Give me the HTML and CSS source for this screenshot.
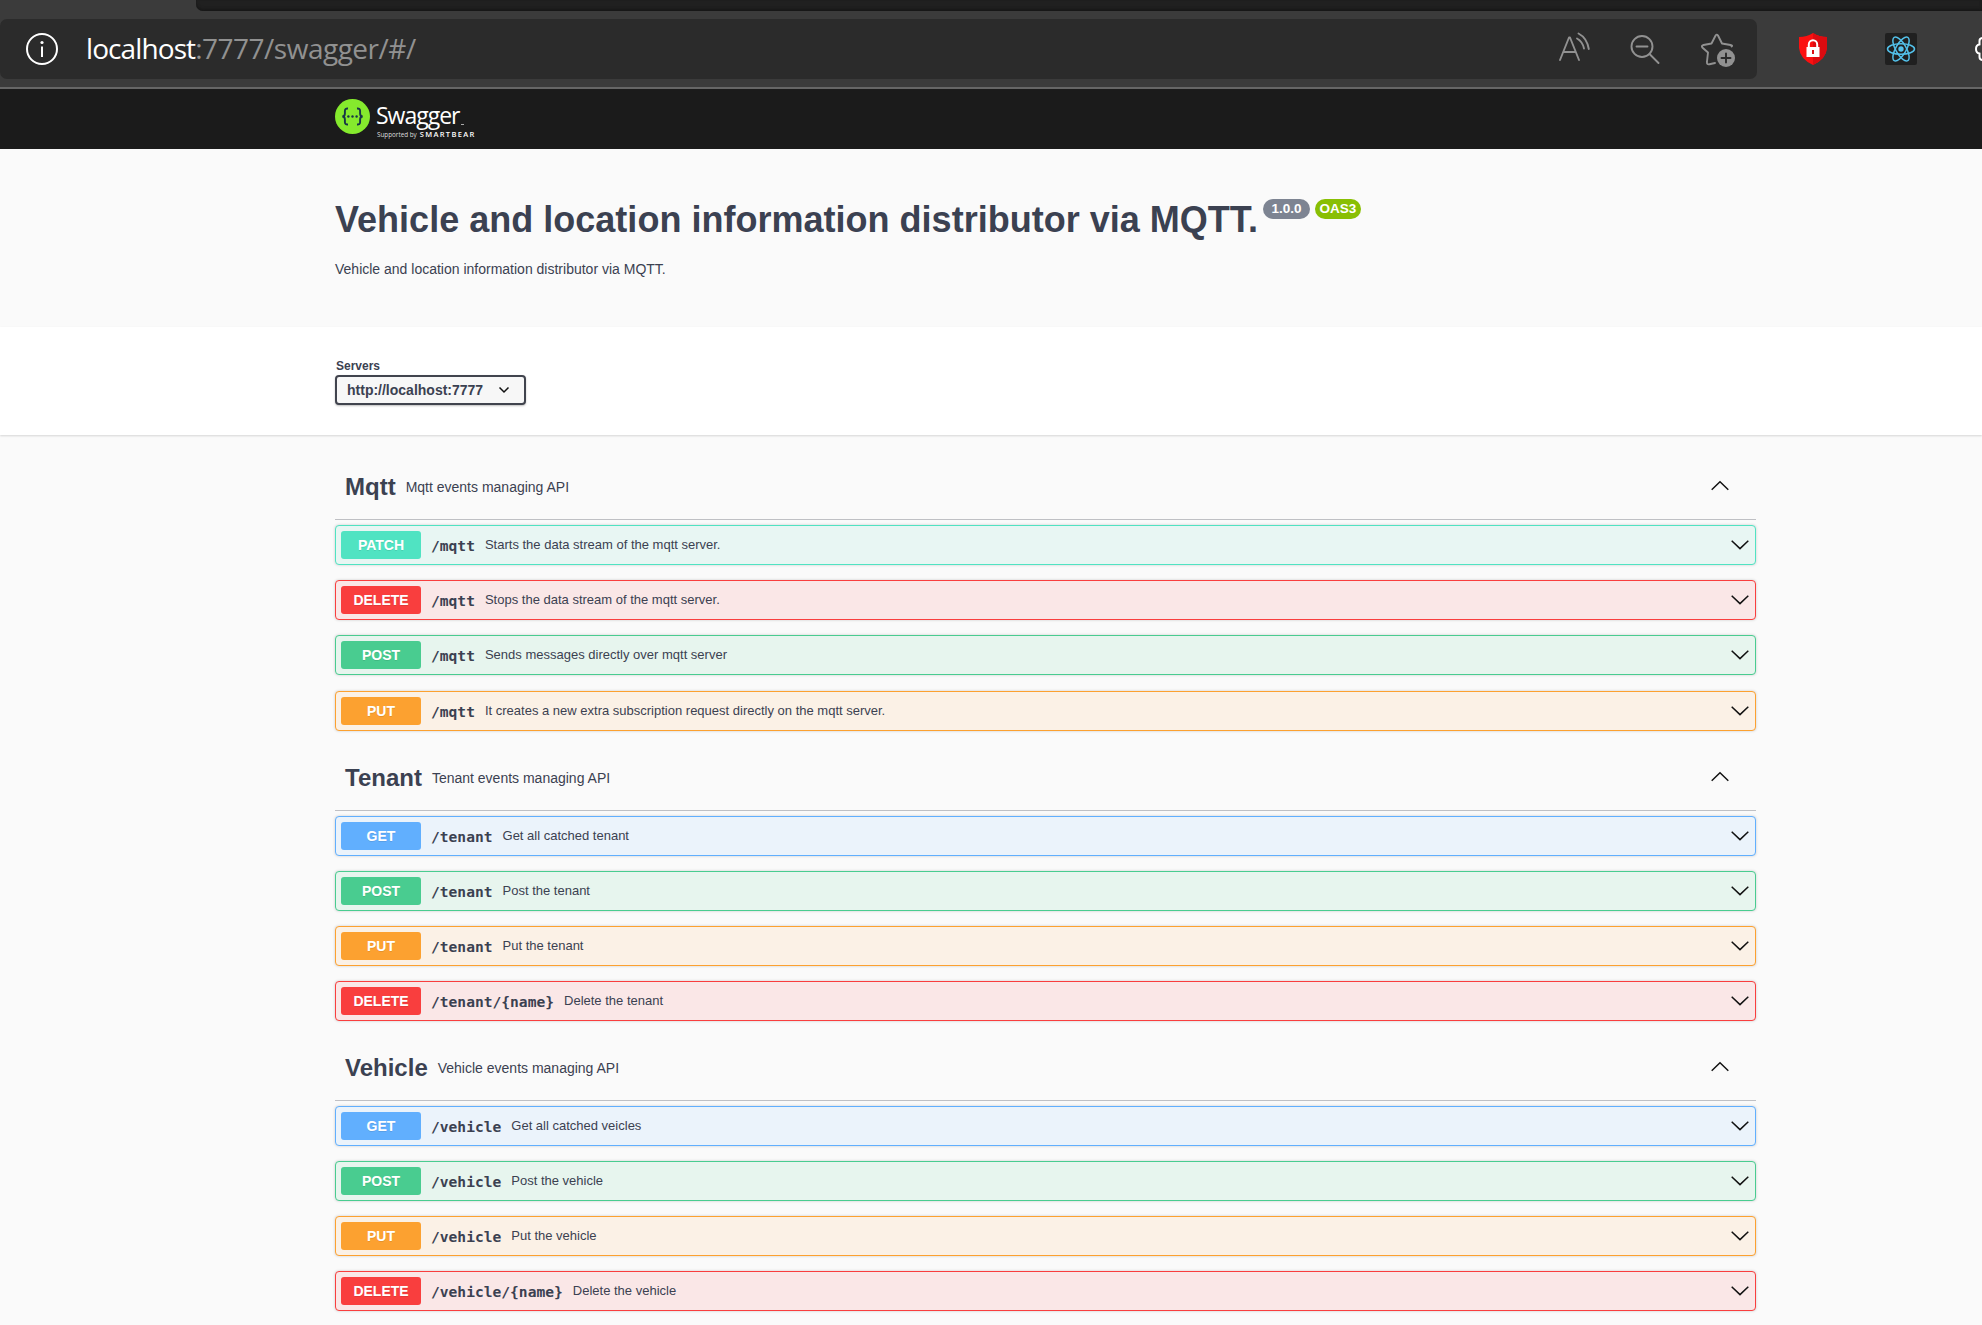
FILE: index.html
```
<!DOCTYPE html>
<html lang="en">
<head>
<meta charset="utf-8">
<title>Swagger UI</title>
<link rel="stylesheet" href="styles.css">
</head>
<body>
<svg class="defs" aria-hidden="true">
  <symbol id="down" viewBox="0 0 20 12"><path d="M1.7 1.7 L10 9.6 L18.3 1.7"/></symbol>
  <symbol id="up" viewBox="0 0 20 12"><path d="M1.7 9.7 L10 1.8 L18.3 9.7"/></symbol>
</svg>
<header class="browser">
  <div class="tabs"></div>
  <div class="toolbar">
    <div class="address">
      <svg class="info" viewBox="0 0 34 34" fill="none" stroke="#fff" stroke-width="2"><circle cx="17" cy="17" r="15"/><path d="M17 14.5V25"/><circle cx="17" cy="10.5" r="1.6" fill="#fff" stroke="none"/></svg>
      <div class="url"><span class="host">localhost</span><span class="path">:7777/swagger/#/</span></div>
      <svg class="tool read" viewBox="0 0 32 30"><path d="M1 28 L10 5.5 H11 L20 28 M4.5 20 H16.5"/><path d="M18 6.5 Q23.500 9.500 25 16.5"/><path d="M19.500 1.500 Q28 6 29.800 17"/></svg>
      <svg class="tool search" viewBox="0 0 30 30"><circle cx="12" cy="12.500" r="10.500"/><path d="M6.500 12.500H17.500M19.500 20L28.500 29"/></svg>
      <svg class="tool star" viewBox="0 0 36 36"><path d="M15 31 L9.500 32.200 Q6.500 33 7 29.500 L8 20.500 L2.300 15.500 Q1 13.800 3.500 13 L11.500 11.500 L15.600 3.500 Q16.800 1.800 18 3.500 L22 11.500 L30.500 13 Q33 13.500 31.500 14.500"/><circle cx="26" cy="26" r="9" fill="#919191" stroke="none"/><path d="M26 21.500v9M21.500 26h9" stroke="#2b2b2b"/></svg>
    </div>
    <svg class="shield" viewBox="0 0 30 34"><path d="M15 1 Q21 5 29 5 V16 Q28 27 15 33 Q2 27 1 16 V5 Q9 5 15 1Z" fill="#fb1010"/><path d="M15 1 Q21 5 29 5 V16 Q28 27 15 33Z" fill="#dc0b10"/><path d="M10.800 15V12.500a4.200 4.200 0 0 1 8.400 0V15" fill="none" stroke="#fff" stroke-width="2"/><rect x="8.500" y="15" width="13" height="10" fill="#fff"/><path d="M14 18h2v4h-2z" fill="#d91016"/></svg>
    <svg class="react" viewBox="0 0 32 32"><rect width="32" height="32" rx="2" fill="#202020"/><g fill="none" stroke="#53c1ea" stroke-width="1.500"><ellipse cx="16" cy="16" rx="13.500" ry="5.200"/><ellipse cx="16" cy="16" rx="13.500" ry="5.200" transform="rotate(60 16 16)"/><ellipse cx="16" cy="16" rx="13.500" ry="5.200" transform="rotate(120 16 16)"/></g><circle cx="16" cy="16" r="2.700" fill="#53c1ea"/></svg>
    <svg class="puzzle" viewBox="0 0 7 26" fill="none" stroke="#fff" stroke-width="2"><path d="M8 2 Q4.500 2 4.500 5 V8.500 Q1 9 1 13 Q1 17 4.500 17.500 V21 Q4.500 24 8 24"/></svg>
  </div>
</header>
<div class="topbar">
  <div class="wrap brand">
    <svg class="logo" viewBox="0 0 35 35"><circle cx="17.500" cy="17.500" r="17.500" fill="#85ea2d"/><g fill="none" stroke="#173647" stroke-width="1.900"><path d="M13 9.500 Q9.800 9.300 9.900 12 V14.500 Q9.900 17.400 7.300 17.500 Q9.900 17.600 9.900 20.500 V23 Q9.800 25.700 13 25.500M22 9.500 Q25.200 9.300 25.100 12 V14.500 Q25.100 17.400 27.700 17.500 Q25.100 17.600 25.100 20.500 V23 Q25.200 25.700 22 25.500"/></g><g fill="#173647"><circle cx="13.400" cy="17.500" r="1.200"/><circle cx="17.500" cy="17.500" r="1.200"/><circle cx="21.600" cy="17.500" r="1.200"/></g></svg>
    <div class="wordmark"><div class="name">Swagger<i></i></div><div class="support"><span>Supported by</span><b>SMARTBEAR</b></div></div>
  </div>
</div>
<section class="intro"><div class="wrap">
  <h1><span class="title">Vehicle and location information distributor via MQTT.</span><span class="badge">1.0.0</span><span class="badge oas">OAS3</span></h1>
  <p>Vehicle and location information distributor via MQTT.</p>
</div></section>
<section class="servers"><div class="wrap">
  <div class="label">Servers</div>
  <div class="select"><span>http://localhost:7777</span><svg viewBox="0 0 12 8"><path d="M1.500 1.500L6 6L10.500 1.500"/></svg></div>
</div></section>
<main class="wrap">
  <section class="group mqtt">
    <div class="head"><h2>Mqtt</h2><span>Mqtt events managing API</span><svg class="chev"><use href="#up"/></svg></div>
    <div class="op patch"><b>PATCH</b><code>/mqtt</code><span>Starts the data stream of the mqtt server.</span><svg class="chev"><use href="#down"/></svg></div>
    <div class="op delete"><b>DELETE</b><code>/mqtt</code><span>Stops the data stream of the mqtt server.</span><svg class="chev"><use href="#down"/></svg></div>
    <div class="op post"><b>POST</b><code>/mqtt</code><span>Sends messages directly over mqtt server</span><svg class="chev"><use href="#down"/></svg></div>
    <div class="op put"><b>PUT</b><code>/mqtt</code><span>It creates a new extra subscription request directly on the mqtt server.</span><svg class="chev"><use href="#down"/></svg></div>
  </section>
  <section class="group">
    <div class="head"><h2>Tenant</h2><span>Tenant events managing API</span><svg class="chev"><use href="#up"/></svg></div>
    <div class="op get"><b>GET</b><code>/tenant</code><span>Get all catched tenant</span><svg class="chev"><use href="#down"/></svg></div>
    <div class="op post"><b>POST</b><code>/tenant</code><span>Post the tenant</span><svg class="chev"><use href="#down"/></svg></div>
    <div class="op put"><b>PUT</b><code>/tenant</code><span>Put the tenant</span><svg class="chev"><use href="#down"/></svg></div>
    <div class="op delete"><b>DELETE</b><code>/tenant/{name}</code><span>Delete the tenant</span><svg class="chev"><use href="#down"/></svg></div>
  </section>
  <section class="group">
    <div class="head"><h2>Vehicle</h2><span>Vehicle events managing API</span><svg class="chev"><use href="#up"/></svg></div>
    <div class="op get"><b>GET</b><code>/vehicle</code><span>Get all catched veicles</span><svg class="chev"><use href="#down"/></svg></div>
    <div class="op post"><b>POST</b><code>/vehicle</code><span>Post the vehicle</span><svg class="chev"><use href="#down"/></svg></div>
    <div class="op put"><b>PUT</b><code>/vehicle</code><span>Put the vehicle</span><svg class="chev"><use href="#down"/></svg></div>
    <div class="op delete"><b>DELETE</b><code>/vehicle/{name}</code><span>Delete the vehicle</span><svg class="chev"><use href="#down"/></svg></div>
  </section>
</main>
</body>
</html>
```
FILE: styles.css
```
* { box-sizing: border-box; }
html, body { height: 1325px; overflow: hidden; }
body { margin: 0; background: #fafafa; color: #3b4151; font-family: "Liberation Sans", Arial, sans-serif; }
svg { display: block; flex: none; }
.defs { width: 0; height: 0; position: absolute; }
.wrap { width: 1421px; margin-left: 335px; }

.browser { height: 89px; background: #3b3b3b; border-bottom: 2px solid #666; overflow: hidden; }
.tabs { height: 11px; margin-left: 196px; background: #202020; border-bottom-left-radius: 7px; box-shadow: inset 0 -2px 3px #171717; }
.toolbar { display: flex; align-items: center; height: 60px; margin-top: 8px; }
.address { display: flex; align-items: center; width: 1757px; height: 60px; padding-left: 25px; background: #2b2b2b; border-radius: 7px; flex: none; }
.info { width: 34px; height: 34px; }
.url { display: flex; margin: -2px 0 0 27px; width: 1473px; font: 28px/40px "Open Sans", "Noto Sans", sans-serif; white-space: pre; }
.host { color: #fff; letter-spacing: -0.9px; }
.path { color: #919191; letter-spacing: -0.5px; }
.tool { fill: none; stroke: #919191; stroke-width: 1.9; stroke-linecap: round; stroke-linejoin: round; }
.read { width: 32px; height: 30px; margin-top: -4px; }
.search { width: 30px; height: 30px; margin-left: 39px; }
.star { width: 36px; height: 36px; margin: 2px 0 0 40px; }
.shield { width: 30px; height: 34px; margin-left: 41px; }
.react { width: 32px; height: 32px; margin-left: 57px; }
.puzzle { width: 7px; height: 26px; margin-left: 58px; }

.topbar { height: 60px; background: #1b1b1b; }
.brand { display: flex; padding-top: 10px; }
.logo { width: 35px; height: 35px; }
.wordmark { margin-left: 6px; color: #fff; font-family: "Open Sans", sans-serif; }
.name { display: flex; align-items: flex-end; height: 29px; margin-top: 2px; font-size: 23px; line-height: 29px; letter-spacing: -1px; }
.name i { width: 3px; height: 1px; margin: 0 0 5px 1px; background: #aaa; }
.support { display: flex; gap: 3px; padding-left: 1px; font-size: 6.3px; line-height: 9px; }
.support span { color: #ddd; }
.support b { font-size: 7.5px; font-weight: 600; letter-spacing: 1.35px; }

.intro { height: 178px; padding-top: 50px; }
h1 { display: flex; margin: 0; font-size: 36px; line-height: 41px; }
.title { white-space: nowrap; letter-spacing: 0.015px; }
.badge { height: 20px; width: 47px; margin: 0 0 0 5px; border-radius: 10px; background: #7d8492; color: #fff; font-size: 13.5px; line-height: 20px; text-align: center; flex: none; }
.oas { width: 46px; background: #89bf04; }
.intro p { margin: 20px 0 0; font-size: 14px; line-height: 18px; }

.servers { height: 108px; padding-top: 32px; background: #fff; box-shadow: 0 1px 2px rgba(0,0,0,.15); }
.label { height: 16px; padding-left: 1px; font-size: 12px; font-weight: bold; line-height: 15px; }
.select { display: flex; align-items: center; width: 191px; height: 30px; padding-left: 10px; border: 2px solid #41444e; border-radius: 4px; background: #f7f7f7; box-shadow: 0 1px 2px rgba(0,0,0,.25); font-size: 14px; font-weight: bold; }
.select svg { width: 12px; height: 8px; margin-left: 15px; fill: none; stroke: #111; stroke-width: 1.5; }

main .group:first-child { padding-top: 20px; }
.head { display: flex; align-items: center; height: 65px; margin-bottom: 5px; padding: 0 26px 0 10px; border-bottom: 1px solid #bfc0c4; }
h2 { margin: 0; font-size: 24px; line-height: 30px; }
.head span { margin-left: 10px; font-size: 14px; line-height: 20px; }
.chev { width: 20px; height: 12px; margin-left: auto; fill: none; stroke: #111; stroke-width: 1.5; }
.head .chev { margin-top: -3px; }
.op { display: flex; align-items: center; height: 40px; margin-bottom: 15px; padding: 0 5px; border: 1px solid; border-radius: 4px; box-shadow: 0 0 3px rgba(0,0,0,.19); }
.mqtt .post { margin-bottom: 16px; }
.op b { width: 80px; height: 28px; border-radius: 3px; color: #fff; font-size: 14px; line-height: 28px; text-align: center; text-shadow: 0 1px 0 rgba(0,0,0,.1); }
.op code { margin: 2px 0 0 10px; font: bold 14.6px/20px "DejaVu Sans Mono", monospace; }
.op span { margin-left: 10px; font-size: 13px; line-height: 20px; }
.op.patch { border-color: #50e3c2; background: #e8f6f3; } .patch b { background: #50e3c2; }
.op.delete { border-color: #f93e3e; background: #fae7e7; } .delete b { background: #f93e3e; }
.op.post { border-color: #49cc90; background: #e7f5ee; } .post b { background: #49cc90; }
.op.put { border-color: #fca130; background: #fbf1e6; } .put b { background: #fca130; }
.op.get { border-color: #61affe; background: #ebf3fb; } .get b { background: #61affe; }
```
